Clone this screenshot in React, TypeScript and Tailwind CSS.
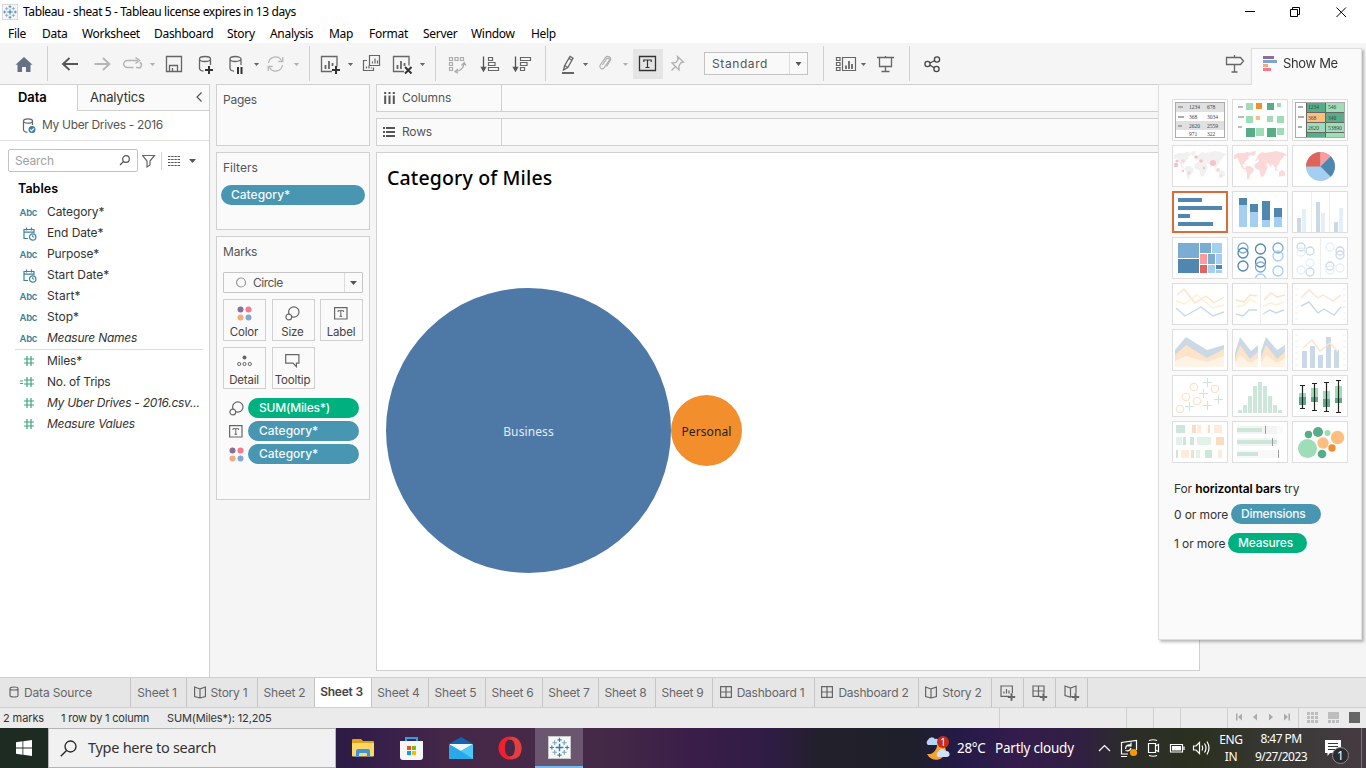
import React from "react";

type SlotProps = { x: number; w: number; y?: number; h?: number; children?: React.ReactNode };

/* An icon slot whose drawing coordinates are those of the window. */
function Slot({ x, w, y = 43, h = 41, children }: SlotProps) {
  return (
    <svg className="block shrink-0" width={w} height={h} viewBox={`${x} ${y} ${w} ${h}`} fill="none" stroke="#666" strokeWidth="1.3">
      {children}
    </svg>
  );
}

const Sep = () => <div className="h-[35px] w-px shrink-0 bg-[#d0d0d0]" />;

function Caret({ x, y = 64.5, c = "#666" }: { x: number; y?: number; c?: string }) {
  return <path d={`M${x - 2.6} ${y - 1.5}h5.2l-2.6 3z`} fill={c} stroke="none" />;
}

function Plus({ x, y, s = 4, c = "#333" }: { x: number; y: number; s?: number; c?: string }) {
  return <path d={`M${x - s} ${y}h${s * 2}M${x} ${y - s}v${s * 2}`} stroke={c} strokeWidth="2" />;
}

function TableauMark({ s }: { s: number }) {
  const p = (x: number, y: number, r: number, c: string, w = 1.2) => (
    <path key={`${x}-${y}`} d={`M${x - r} ${y}h${2 * r}M${x} ${y - r}v${2 * r}`} stroke={c} strokeWidth={w} />
  );
  return (
    <svg className="block" width={s} height={s} viewBox="0 0 24 24" fill="none">
      <rect x=".5" y=".5" width="23" height="23" fill="#f7f7f7" stroke="#c9c9c9" />
      {p(12, 12, 4, "#2d7fa8", 1.5)}
      {p(12, 4, 2.2, "#3f7fb0")}
      {p(12, 20, 2.2, "#3f7fb0")}
      {p(4, 12, 2.2, "#3f7fb0")}
      {p(20, 12, 2.2, "#3f7fb0")}
      {p(7, 7, 2.5, "#7ba7c4")}
      {p(17, 7, 2.5, "#7ba7c4")}
      {p(7, 17, 2.5, "#7ba7c4")}
      {p(17, 17, 2.5, "#7ba7c4")}
    </svg>
  );
}

function TitleBar() {
  return (
    <div className="flex h-6 items-center bg-white font-['Noto_Sans',sans-serif] text-[12px] text-black">
      <div className="ml-[2px] w-[16px]"><TableauMark s={16} /></div>
      <div className="ml-[5px] whitespace-nowrap tracking-[-0.39px]">Tableau - sheat 5 - Tableau license expires in 13 days</div>
      <svg className="ml-auto mr-[16px]" width="106" height="20" viewBox="1244 0 106 20" fill="none" stroke="#000" strokeWidth="1">
        <path d="M1245 9.5h10M1290.500 7.500h7v7h-7zM1292.500 7.500v-2h7v7h-2M1336.500 5.500l9.500 9.500M1346 5.500l-9.500 9.500" />
      </svg>
    </div>
  );
}

const menus: [string, string][] = [
  ["File", "w-[34px]"], ["Data", "w-[40px]"], ["Worksheet", "w-[72px]"], ["Dashboard", "w-[73px]"], ["Story", "w-[43px]"],
  ["Analysis", "w-[59px]"], ["Map", "w-[40px]"], ["Format", "w-[54px]"], ["Server", "w-[48px]"], ["Window", "w-[60px]"], ["Help", "w-[40px]"],
];

function MenuBar() {
  return (
    <div className="flex h-[19px] items-center bg-white pl-[8px] font-['Noto_Sans',sans-serif] text-[12px] text-black">
      {menus.map(([m, w]) => (
        <div key={m} className={`${w} shrink-0 whitespace-nowrap tracking-[-0.3px]`}>{m}</div>
      ))}
    </div>
  );
}

function Db({ x }: { x: number }) {
  return <path d={`M${x - 5.500} 59a5.500 2.500 0 0 1 11 0a5.500 2.500 0 0 1 -11 0v9.500q.3 2.200 4 2.700M${x + 5.500} 59v6`} />;
}

function Toolbar() {
  return (
    <div className="flex h-[41px] items-center bg-[#f5f5f5]">
      <Slot x={0} w={47}>
        <path d="M15.500 64.800L24 57l8.500 7.800h-2V72h-4.500v-5h-4v5h-4.500v-7.200z" fill="#667284" stroke="none" />
      </Slot>
      <Sep />
      <Slot x={48} w={261}>
        <path d="M63 64h15M69.500 58l-6.500 6 6.500 6" stroke="#555" strokeWidth="1.800" />
        <path d="M94.500 64h15M103 58l6.500 6-6.500 6" stroke="#b5b5b5" strokeWidth="1.800" />
        <path d="M133.500 67.500h-6a3.800 3.500 0 0 1 0-7H138M135.500 57.500l4 3-4 3M139.800 62.500a2.700 2.700 0 0 1-2.300 5h-1.500" stroke="#b5b5b5" strokeWidth="1.500" />
        <Caret x={152.500} c="#b0b0b0" />
        <path d="M166.500 56.500h15v15h-15zM169.500 71v-5.500h8V71M172.500 71v-3" />
        <Db x={205} /><Plus x={209} y={70} />
        <Db x={235.500} /><path d="M238 67v7M241.500 67v7" stroke="#333" strokeWidth="2" />
        <Caret x={256.500} />
        <path d="M268.500 63a7 7 0 0 1 13-2.500M282.500 65a7 7 0 0 1-13 2.500M282.800 57v4.500h-4.500M268.200 71v-4.500h4.500" stroke="#b8b8b8" />
        <Caret x={296.500} c="#b0b0b0" />
      </Slot>
      <Sep />
      <Slot x={310} w={125}>
        <path d="M332 71.500h-10.500v-15h15.500v10" />
        <path d="M325.500 69v-4M329 69v-8M332.500 66v-3" strokeWidth="1.800" />
        <Plus x={336} y={70} />
        <Caret x={350.500} />
        <path d="M369.500 55.500h10v10h-10z M372.500 63.500v-2M375 63.500v-5M377.500 63.500v-3M367 60.500h-3.500v10h10v-3M366.500 68.500v-2M369 68.500v-3M371.500 68.500v-1" strokeWidth="1.200" />
        <path d="M404 71.500h-10.500v-15h15.500v9" />
        <path d="M397.500 69v-4M401 69v-8M404.500 66v-3" strokeWidth="1.800" />
        <path d="M405 67l6.500 6.500M411.500 67l-6.500 6.500" stroke="#333" strokeWidth="2" />
        <Caret x={422.500} />
      </Slot>
      <Sep />
      <Slot x={436} w={109}>
        <path d="M449.500 57.500h3v3h-3zM455 57.500h3v3h-3zM460.500 57.500h3v3h-3zM449.500 62.500h3v3h-3zM449.500 67.500h3v3h-3zM464 63.500q-.5 6.500-8 8M461.500 65.500l2.700-3 1.800 3M458 69l-3 2.700 3 1.500" stroke="#ababab" strokeWidth="1.200" />
        <path d="M483.500 56.500v14M481.500 67.500l2 3.500 2-3.500z" fill="#555" stroke="#555" />
        <path d="M488.500 57.500h4v3h-4zM488.500 62.500h6.500v3h-6.500zM488.500 67.500h10v3h-10z" strokeWidth="1.200" />
        <path d="M515.500 56.500v14M513.500 67.500l2 3.500 2-3.500z" fill="#555" stroke="#555" />
        <path d="M520.500 57.500h10v3h-10zM520.500 62.500h6.500v3h-6.500zM520.500 67.500h4v3h-4z" strokeWidth="1.200" />
      </Slot>
      <Sep />
      <Slot x={546} w={87}>
        <path d="M563.500 70l1.200-4.500 5.300-9 3 1.800-5.200 9.200zM564.700 65.500l3 2M569 58.500l3 1.800" />
        <path d="M562 73h12" stroke="#555" strokeWidth="1.800" />
        <Caret x={585.500} />
        <path d="M602.500 65l4.300-6.500a1.500 1.500 0 0 1 2.500 1.500l-5.300 8a2.400 2.400 0 0 1-4-2.500l5.500-8.200a3 3 0 0 1 5 3l-4 6.200" stroke="#b0b0b0" strokeWidth="1.200" />
        <Caret x={625.500} c="#b0b0b0" />
      </Slot>
      <div className="h-[30px] w-[30px] shrink-0 bg-[#e5e5e5]">
        <Slot x={633} w={30} y={49} h={30}>
          <path d="M639.500 56.500h16v14h-16z" stroke="#333" />
          <path d="M643.800 62v-2h7.400v2M647.500 60v7.500M645.500 67.500h4" stroke="#333" strokeWidth="1.200" />
        </Slot>
      </div>
      <Slot x={663} w={41}>
        <path d="M677.500 56.500l6 5.500-2.500.5-2 3.500v4l-7-7 4-.5 2-3zM675.500 66.500l-4 4" stroke="#b0b0b0" />
      </Slot>
      <div className="flex h-[23px] w-[104px] shrink-0 border border-[#c3c3c3] bg-[#f9f9f9]">
        <div className="w-[85px] pl-[7px] text-[12px] leading-[21px] tracking-[0.6px] text-[#555]">Standard</div>
        <div className="flex w-[18px] items-center justify-center border-l border-[#ddd]">
          <svg width="7" height="4" viewBox="0 0 7 4"><path d="M.5 0h6L3.500 4z" fill="#555" /></svg>
        </div>
      </div>
      <Slot x={808} w={15} />
      <Sep />
      <Slot x={824} w={85}>
        <path d="M836.500 57.500h3.500v3h-3.500zM836.500 62.500h3.500v3h-3.500zM836.500 67.500h3.500v3h-3.500zM842.500 57.500h13v13h-13z" strokeWidth="1.200" />
        <path d="M846 69v-3.500M849 69v-8M852 69v-5" strokeWidth="1.800" />
        <Caret x={863.500} />
        <path d="M877 57.500h17M879.500 58v8.500h12V58M885.500 66.500v5M881.500 71.500h8M885.500 56v1.500" />
      </Slot>
      <Sep />
      <Slot x={910} w={341}>
        <g stroke="#444"><circle cx="927.500" cy="64" r="2.600" /><circle cx="937" cy="59.500" r="2.600" /><circle cx="936.500" cy="69" r="2.600" /><path d="M930 63l4.800-2.500M930 65.200l4.200 2.500" /></g>
        <path d="M1226.500 57.500h14l3 3.500-3 3.500h-14zM1234.500 55v2.500M1234.500 64.500v8M1231.500 72h6" />
      </Slot>
    </div>
  );
}

function Abc() {
  return <span className="text-[9.5px] font-semibold tracking-[-0.3px] text-[#3c7f9c]">Abc</span>;
}
function Cal() {
  return (
    <svg width="14" height="14" viewBox="0 0 14 14" fill="none" stroke="#3f829e" strokeWidth="1.200">
      <path d="M5 11.500H1V2.500h10v3.500M1 5.200h10M3.500.5v3M8.500.5v3" /><circle cx="9.700" cy="10" r="3.200" /><path d="M9.700 8.200V10h1.600" strokeWidth="1" />
    </svg>
  );
}
function Hash({ eq }: { eq?: boolean }) {
  return (
    <svg width="14" height="12" viewBox="0 0 14 12" fill="none" stroke="#3da57c" strokeWidth="1.200">
      <path d="M4 4h10M4 8h10M7 1v10M11 1v10" />{eq && <path d="M0 5h3M0 7.500h3" strokeWidth="1" />}
    </svg>
  );
}

type Field = { n: string; k: "abc" | "cal" | "num" | "calc"; t: string };
const dims: Field[] = [
  { n: "Category*", k: "abc", t: "tracking-[-0.1px]" }, { n: "End Date*", k: "cal", t: "tracking-[-0.1px]" }, { n: "Purpose*", k: "abc", t: "tracking-[-0.15px]" },
  { n: "Start Date*", k: "cal", t: "tracking-[-0.03px]" }, { n: "Start*", k: "abc", t: "tracking-[0.1px]" }, { n: "Stop*", k: "abc", t: "tracking-[0px]" },
  { n: "Measure Names", k: "abc", t: "italic tracking-[-0.25px]" },
];
const meas: Field[] = [
  { n: "Miles*", k: "num", t: "tracking-[-0.15px]" }, { n: "No. of Trips", k: "calc", t: "tracking-[-0.25px]" },
  { n: "My Uber Drives - 2016.csv...", k: "num", t: "italic tracking-[-0.28px]" }, { n: "Measure Values", k: "num", t: "italic tracking-[-0.25px]" },
];

function FieldRow({ f }: { f: Field }) {
  return (
    <div className="flex h-[21px] items-center whitespace-nowrap text-[12px] text-[#333]">
      <div className="flex w-[47px] items-center justify-end pr-[10px]">
        {f.k === "abc" ? <span className="pt-[1px]"><Abc /></span> : f.k === "cal" ? <span className="pt-[2px]"><Cal /></span> : <span className="mr-[3px]"><Hash eq={f.k === "calc"} /></span>}
      </div>
      <span className={f.t}>{f.n}</span>
    </div>
  );
}

function DataPane() {
  return (
    <div className="flex w-[210px] shrink-0 flex-col border-r border-[#d0d0d0] bg-white">
      <div className="flex h-[27px] border-t border-[#d4d4d4]">
        <div className="w-[77px] pl-[18px] pt-[3px] text-[13px] font-semibold leading-[18px] tracking-[-0.1px] text-black">Data</div>
        <div className="flex flex-1 justify-between border-b border-l border-[#d0d0d0] bg-[#fafafa] pl-[12px] pt-[3px] text-[13px] leading-[18px] tracking-[-0.2px] text-[#333]">
          Analytics
          <svg className="mr-[6px] mt-[4px]" width="8" height="10" viewBox="0 0 8 10" fill="none" stroke="#555" strokeWidth="1.200"><path d="M6.500.5L2 5l4.500 4.500" /></svg>
        </div>
      </div>
      <div className="flex h-[30px] items-center border-b border-[#e0e0e0] pl-[22px] text-[12px] text-[#555]">
        <svg width="15" height="16" viewBox="0 0 15 16" fill="none" stroke="#666" strokeWidth="1.200">
          <path d="M1.500 3a4.500 2.200 0 0 1 9 0a4.500 2.200 0 0 1-9 0v9q.3 2 4 2.300M10.500 3v4" /><circle cx="10" cy="11.500" r="3.500" fill="#3c7fa0" stroke="none" /><path d="M8.200 11.500l1.400 1.400 2.400-2.600" stroke="#fff" />
        </svg>
        <span className="ml-[5px] whitespace-nowrap pb-[1px] tracking-[-0.33px]">My Uber Drives - 2016</span>
      </div>
      <div className="mt-[8px] flex h-[23px] items-center pl-[8px]">
        <div className="flex h-[23px] w-[130px] items-center justify-between rounded-[2px] border border-[#c3c3c3] pl-[6px] pr-[6px] text-[12px] tracking-[-0.15px] text-[#a0a0a0]">
          Search
          <svg width="12" height="11" viewBox="0 0 12 11" fill="none" stroke="#555" strokeWidth="1.200"><circle cx="7" cy="4" r="3.300" /><path d="M4.500 6.500L1 10" /></svg>
        </div>
        <svg className="ml-[4px]" width="60" height="18" viewBox="142 151 60 18" fill="none" stroke="#666" strokeWidth="1.200">
          <path d="M142.500 154.500h12l-4.500 5.500v4l-3 2v-6z" /><path d="M161.500 151v18" stroke="#d4d4d4" strokeWidth="1" />
          <path d="M168 155.500h12M168 158.500h12M168 161.500h12M168 164.500h12" strokeDasharray="2.400 .8" stroke="#555" /><path d="M189 158h7l-3.500 4z" fill="#555" stroke="none" />
        </svg>
      </div>
      <div className="mt-[8px] pl-[18px] text-[12.5px] font-semibold leading-[18px] tracking-[0.05px] text-black">Tables</div>
      <div className="mt-[3px]">{dims.map((f) => <FieldRow key={f.n} f={f} />)}</div>
      <div className="ml-[15px] mr-[6px] mt-[1px] h-px bg-[#dcdcdc]" />
      <div>{meas.map((f) => <FieldRow key={f.n} f={f} />)}</div>
    </div>
  );
}

const TGlyph = () => (
  <svg width="14" height="13" viewBox="0 0 14 13" fill="none" stroke="#666"><path d="M.6.600h12.400v11.400H.6z" strokeWidth="1.200" /><path d="M4 5V3.700h5.600V5M6.800 3.700v5.600M5.500 9.300h2.600" /></svg>
);
const SizeGlyph = () => (
  <svg width="15" height="15" viewBox="0 0 15 15" fill="none" stroke="#666" strokeWidth="1.200"><circle cx="8.800" cy="6" r="5.200" /><circle cx="3.800" cy="11" r="2.900" fill="#fafafa" /></svg>
);
const ColorGlyph = () => (
  <svg width="15" height="15" viewBox="0 0 15 15"><circle cx="3.500" cy="3.500" r="3" fill="#8a6f96" /><circle cx="11.500" cy="3.500" r="3" fill="#f8788a" /><circle cx="3.500" cy="11.500" r="3" fill="#f4a97f" /><circle cx="11.500" cy="11.500" r="3" fill="#85a7d0" /></svg>
);
const DetailGlyph = () => (
  <svg width="15" height="12" viewBox="0 0 15 12" fill="none" stroke="#666"><circle cx="7.500" cy="2.500" r="2" fill="#666" stroke="none" /><circle cx="2.200" cy="9" r="1.600" /><circle cx="7.500" cy="9" r="1.600" /><circle cx="12.800" cy="9" r="1.600" /></svg>
);
const TipGlyph = () => (
  <svg width="15" height="14" viewBox="0 0 15 14" fill="none" stroke="#666" strokeWidth="1.200"><path d="M.7.700h13.200v8.500h-2.500v3.500L8 9.200H.7z" /></svg>
);

function MarkButton({ label, children }: { label: string; children: React.ReactNode }) {
  return (
    <div className="flex h-[42px] w-[43px] flex-col items-center border border-[#d0d0d0] bg-[#fafafa] pr-[1px]">
      <div className="flex h-[25px] items-center pt-[1px]">{children}</div>
      <div className="whitespace-nowrap text-[11.5px] leading-[14px] tracking-[-0.2px] text-[#444]">{label}</div>
    </div>
  );
}

function Pill({ c, children }: { c: string; children: React.ReactNode }) {
  return <div className={`${c} flex h-5 items-center rounded-full text-[12px] font-medium text-[#f4fafa]`}>{children}</div>;
}

function Shelves() {
  return (
    <div className="ml-[6px] flex w-[154px] shrink-0 flex-col gap-[6px] text-[12px] text-[#555]">
      <div className="h-[62px] border border-[#d0d0d0] bg-[#fafafa] pl-[6px] pt-[7px] leading-[16px] tracking-[-0.25px]">Pages</div>
      <div className="h-[78px] border border-[#d0d0d0] bg-[#fafafa] pl-[4px] pt-[7px]">
        <div className="pl-[2px] leading-[16px]">Filters</div>
        <div className="mt-[9px]"><Pill c="bg-[#4996b2] w-[144px] pl-[10px]">Category*</Pill></div>
      </div>
      <div className="h-[264px] border border-[#d0d0d0] bg-[#fafafa] px-[6px] pt-[7px]">
        <div className="leading-[16px] tracking-[-0.2px]">Marks</div>
        <div className="mt-[12px] flex h-[21px] items-center rounded-[1px] border border-[#c6c6c6] bg-[#fafafa] text-[12px]">
          <svg className="ml-[12px]" width="11" height="11" viewBox="0 0 11 11" fill="none" stroke="#999" strokeWidth="1.200"><circle cx="5" cy="5.500" r="4.500" /></svg>
          <span className="ml-[6px] pt-[1px] tracking-[-0.5px]">Circle</span>
          <div className="ml-auto flex h-[19px] w-[18px] items-center justify-center border-l border-[#ddd]">
            <svg width="7" height="4" viewBox="0 0 7 4"><path d="M0 0h7L3.500 4z" fill="#555" /></svg>
          </div>
        </div>
        <div className="mt-[6px] grid grid-cols-[43px_43px_43px] gap-x-[5.5px] gap-y-[6px]">
          <MarkButton label="Color"><ColorGlyph /></MarkButton>
          <MarkButton label="Size"><SizeGlyph /></MarkButton>
          <MarkButton label="Label"><TGlyph /></MarkButton>
          <MarkButton label="Detail"><DetailGlyph /></MarkButton>
          <MarkButton label="Tooltip"><TipGlyph /></MarkButton>
        </div>
        <div className="mt-[9px] flex flex-col gap-[3px]">
          <div className="flex items-center"><div className="flex w-[25px] pl-[6px]"><SizeGlyph /></div><Pill c="bg-[#00b180] w-[111px] pl-[11px] tracking-[-0.2px]">SUM(Miles*)</Pill></div>
          <div className="flex items-center"><div className="flex w-[25px] pl-[6px]"><TGlyph /></div><Pill c="bg-[#4996b2] w-[111px] pl-[11px]">Category*</Pill></div>
          <div className="flex items-center"><div className="flex w-[25px] pl-[6px]"><ColorGlyph /></div><Pill c="bg-[#4996b2] w-[111px] pl-[11px]">Category*</Pill></div>
        </div>
      </div>
    </div>
  );
}

function Worksheet() {
  return (
    <div className="ml-[6px] flex w-[824px] shrink-0 flex-col text-[12px] text-[#555]">
      <div className="flex h-[28px] border border-[#d0d0d0] bg-[#fafafa]">
        <div className="flex w-[125px] items-center border-r border-[#d0d0d0] pl-[7px]">
          <svg width="11" height="13" viewBox="0 0 11 13" stroke="#555" strokeWidth="2"><path d="M1.200 0v2M5.500 0v2M9.800 0v2M1.200 3.500V12M5.500 3.500V12M9.800 3.500V12" /></svg>
          <span className="ml-[7px] tracking-[-0.1px]">Columns</span>
        </div>
      </div>
      <div className="mt-[6px] flex h-[28px] border border-[#d0d0d0] bg-[#fafafa]">
        <div className="flex w-[125px] items-center border-r border-[#d0d0d0] pl-[6px]">
          <svg width="13" height="11" viewBox="0 0 13 11" stroke="#555" strokeWidth="2"><path d="M0 1h2M0 5h2M0 9h2M3 1h9M3 5h9M3 9h9" /></svg>
          <span className="ml-[6px] tracking-[-0.2px]">Rows</span>
        </div>
      </div>
      <div className="mt-[6px] flex h-[519px] flex-col border border-[#d0d0d0] bg-white">
        <div className="ml-[10px] mt-[12px] whitespace-nowrap font-['Noto_Sans',sans-serif] text-[19.5px] font-medium leading-[26px] tracking-[0.15px] text-black">Category of Miles</div>
        <div className="ml-[9px] mt-[97px] flex items-center font-['Noto_Sans',sans-serif] text-[12px]">
          <div className="flex h-[285px] w-[285px] items-center justify-center rounded-full bg-[#4e79a7] pt-[2px] tracking-[0.1px] text-[#e3eaf2]">Business</div>
          <div className="flex h-[71px] w-[71px] items-center justify-center rounded-full bg-[#f28e2b] pt-[2px] tracking-[0.1px] text-[#222]">Personal</div>
        </div>
      </div>
    </div>
  );
}

const B = "#5087b0", LB = "#a5cff0", FB = "#cbd9e7", FLB = "#e3f0fb", FO = "#fde3c8", G = "#56ad87", LG = "#9fdcb8", O = "#ffbe7e", FG = "#cce6da";

const bars = (rs: [number, number, number, number, string][]) =>
  rs.map(([x, y, w, h, c], i) => <rect key={i} x={x} y={y} width={w} height={h} fill={c} />);
const dots = (rs: [number, number, number, string][]) => rs.map(([x, y, r, c], i) => <circle key={i} cx={x} cy={y} r={r} fill={c} />);
const rings = (rs: [number, number, string][], r = 5) => rs.map(([x, y, c], i) => <circle key={i} cx={x} cy={y} r={r} fill="none" stroke={c} strokeWidth="1.300" />);
const line = (d: string, c: string) => <path d={d} fill="none" stroke={c} strokeWidth="1.400" />;
const nums = (rs: [number, number, string][]) => rs.map(([x, y, t], i) => <text key={i} x={x} y={y} className="font-['Liberation_Serif',serif] text-[5.5px]" fill="#444">{t}</text>);

function World({ c }: { c: string }) {
  return (
    <path
      fill={c}
      d="M2 10l4-2 6 0 3-1 5 1-2 3-2 0 1 2-3 3-2 2 1 2-3-1 2 4 2 0 0 2-4-2-3-6-1-4-4 1zM19 7l5-1-1 4-3 1zM14 21l4 0 4 3-1 3-3 3-1 4-2 0 0-6-2-4zM25 13l1-3 4-3 3 1 6-1 5-1 8 2 3 2-3 1-2 3-2 2-1 3-2 2-1 3-2-3-2-2-1 4-2-4-3-1 1 3-3 0-2-3-5 0 2-2-1-2-2 2-1 0zM24 18l6-1 4 4 2 1-2 4-2 5-3 1-2-7-3-1-2-3zM47 27l3-2 3 2 0 4-3 0-3 1zM43 22l3 3 1 1-4-1z"
    />
  );
}

const thumbs: React.ReactNode[] = [
  <>
    <rect x="3.500" y="3.500" width="49" height="35" fill="#fff" stroke="#aaa" />
    {bars([[4, 4, 48, 9, "#e0e0e0"], [4, 22, 48, 9, "#e0e0e0"], [6, 7, 5, 2, "#aaa"], [6, 17, 6, 2, "#aaa"], [6, 26, 4, 2, "#aaa"]])}
    {nums([[17, 10.300, "1234"], [35, 10.300, "678"], [17, 19.500, "368"], [35, 19.500, "3034"], [17, 28.500, "2620"], [35, 28.500, "2559"], [17, 36.500, "971"], [35, 36.500, "322"]])}
  </>,
  <>{bars([[6, 7, 5, 2, "#bbb"], [6, 17, 6, 2, "#bbb"], [6, 27, 4, 2, "#bbb"], [14, 4, 7, 7, LG], [24, 4, 6, 6, "#f28e2b"], [35, 4, 7, 7, G], [45, 4, 4, 4, LG], [14, 17, 7, 7, LG], [24, 17, 4, 4, O], [35, 17, 6, 6, LG], [45, 17, 7, 7, LG], [14, 29, 9, 9, G], [24, 29, 8, 8, LG], [35, 29, 9, 9, G], [45, 29, 7, 7, LG]])}</>,
  <>
    <rect x="3.500" y="3.500" width="49" height="35" fill="#fff" stroke="#aaa" />
    {bars([[14, 4, 19, 9, G], [33, 4, 19, 9, LG], [14, 13, 19, 10, O], [33, 13, 19, 10, G], [14, 23, 19, 10, LG], [33, 23, 19, 10, LG], [14, 34, 19, 4, G], [33, 34, 19, 4, LG], [6, 7, 5, 2, "#aaa"], [6, 17, 6, 2, "#aaa"], [6, 27, 4, 2, "#aaa"]])}
    <path d="M14.500 4v34M33.500 4v34M14 13.500h38M14 23.500h38M14 33.500h38" stroke="#666" />
    {nums([[16, 10.300, "1234"], [36, 10.300, "546"], [16, 20.500, "368"], [36, 20.500, "340"], [16, 30.500, "2620"], [36, 30.500, "53890"]])}
  </>,
  <><World c="#f1f1f1" />{dots([[4, 20, 2.200, "#f3c3c8"], [5, 16, 1.500, "#f3c3c8"], [11, 16, 1.800, "#f8d8da"], [24, 12, 1.800, "#f3c3c8"], [29, 16, 1.800, "#f3c3c8"], [41, 18, 3, "#f3c3c8"], [46, 25, 2, "#f8d8da"], [17, 28, 2, "#f8d8da"], [11, 26, 1.200, "#f3c3c8"], [49, 31, 1.500, "#f8d8da"], [32, 23, 1.200, "#f3c3c8"]])}</>,
  <World c="#fbd9d8" />,
  <><circle cx="28.500" cy="21.500" r="14.500" fill={LB} /><path d="M28.500 21.500V7A14.500 14.500 0 0 0 14 21.500z" fill="#e06459" /><path d="M28.500 21.500V7a14.500 14.500 0 0 1 10.200 4.300z" fill="#ff9c9a" /><path d="M28.500 21.500l10.200-10.200a14.500 14.500 0 0 1 0 20.500z" fill={B} /></>,
  <>{bars([[6, 7, 24, 4, B], [6, 15, 44, 4, B], [6, 23, 12, 4, B], [6, 31, 35, 4, B]])}</>,
  <>{bars([[7, 7, 8, 7, B], [7, 14, 8, 22, LB], [18, 13, 8, 8, B], [18, 21, 8, 15, LB], [30, 10, 8, 19, B], [30, 29, 8, 7, LB], [42, 17, 8, 9, B], [42, 26, 8, 10, LB]])}</>,
  <>{bars([[19, 1, 1, 40, "#eee"], [37, 1, 1, 40, "#eee"], [5, 27, 4, 14, FB], [10, 18, 4, 23, FLB], [24, 11, 4, 30, FB], [29, 22, 4, 19, FLB], [42, 31, 4, 10, FB], [47, 17, 4, 24, FLB]])}</>,
  <>{bars([[6, 6, 21, 15, "#7badd2"], [6, 22, 21, 14, B], [28, 6, 11, 10, "#7badd2"], [40, 6, 10, 10, LB], [28, 17, 7, 10, "#ff9c9a"], [36, 17, 7, 10, "#7badd2"], [44, 17, 6, 10, LB], [28, 28, 7, 8, "#e06459"], [36, 28, 7, 8, LB], [44, 28, 6, 4, B], [44, 33, 6, 3, LB]])}</>,
  <>{rings([[11, 11, "#7badd2"], [11, 16, B], [11, 29, B], [28.500, 12, B], [28.500, 25, B], [28.500, 30, "#7badd2"], [28.500, 42, LB], [46, 11, "#7badd2"], [46, 19, LB], [46, 34, LB]])}</>,
  <><path d="M28.500 1v40" stroke="#eee" />{rings([[9, 10, FB], [9, 15, FLB], [18, 14, FB], [18, 26, FLB], [9, 33, FLB], [18, 35, FB], [38, 10, FLB], [48, 14, FB], [48, 18, FB], [38, 29, FB], [38, 33, FLB], [48, 31, FLB]], 4)}</>,
  <>{line("M5 12l7-6 11 14 11-7 8 7 10-6", FO)}{line("M4 18l8 3 13-9 16 13 11-3", "#fff0cf")}{line("M4 25l9 8 16-9 12 9 11-4", FB)}</>,
  <><path d="M28.500 1v40" stroke="#eee" />{line("M4 17l8 2 6-7 7 1M32 17l7-7 6 4 8-2", FO)}{line("M4 24l8-2 6-6 7 4M31 23l8-3 5 2 8-3", "#fff0cf")}{line("M4 31l7 2 6-6h8M31 31l7-4 6 3 8-3", FB)}</>,
  <><path d="M3 6h3M3 12h3M3 18h3M3 24h3M3 30h3M3 36h3M51 6h3M51 12h3M51 18h3M51 24h3M51 30h3M51 36h3" stroke="#eee" />{line("M9 15l8-8 9 8 5-3 10 6 8-6", FO)}{line("M9 23l8-4 9 11 6-4 10 6 7-8", FB)}</>,
  <><path d="M3 21L14 8l21 13 17-5v20H3z" fill={FB} /><path d="M3 26l11-10 21 13 17-9v18H3z" fill={FO} /><path d="M3 32l11-5 21 6 17-6v11H3z" fill="#fff3e5" /></>,
  <><path d="M3 24L8 8l11 14 7-6v20H3zM29 22l5-14 11 13 8-5v20H29z" fill={FB} /><path d="M3 29l5-13 10 14 8-7v15H3zM29 29l5-13 11 14 8-7v15H29z" fill={FO} /><path d="M3 34l5-8 10 8 8-5v9H3zM29 34l5-8 11 8 8-5v9H29z" fill="#fff3e5" /></>,
  <><path d="M3 6h3M3 12h3M3 18h3M3 24h3M3 30h3M3 36h3M51 6h3M51 12h3M51 18h3M51 24h3M51 30h3M51 36h3" stroke="#eee" />{bars([[10, 22, 5, 17, FB], [18, 17, 5, 22, FB], [26, 26, 5, 13, FB], [34, 8, 5, 31, FB], [42, 21, 5, 18, FB]])}{line("M11 19l9-8 8 11 10-8 8 9", FO)}</>,
  <>{rings([[22, 12, FO], [43, 14, FO], [14, 22, FO], [25, 26, FO], [8, 34, FO]], 3.700)}<path d="M31 7.500h9M35.500 3v9M27 18.500h9M31.500 14v9M42 24.500h9M46.500 20v9M31 30.500h9M35.500 26v9M13 31.500h9M17.500 27v9" stroke={FG} strokeWidth="1" /></>,
  <>{bars([[6, 35, 4, 3, FG], [11, 30, 4, 8, FG], [16, 21, 4, 17, FG], [21, 11, 4, 27, FG], [26, 7, 4, 31, FG], [31, 11, 4, 27, FG], [36, 21, 4, 17, FG], [41, 30, 4, 8, FG], [46, 35, 4, 3, FG]])}</>,
  <>{bars([[7, 18, 7, 4, LG], [7, 22, 7, 8, G], [19, 13, 7, 9, LG], [19, 22, 7, 5, G], [31, 16, 7, 8, LG], [31, 24, 7, 8, G], [43, 11, 7, 12, LG], [43, 23, 7, 5, G]])}<path d="M10.500 10v24M8 10.500h5M8 33.500h5M22.500 8v28M20 8.500h5M20 35.500h5M34.500 7v30M32 7.500h5M32 36.500h5M46.500 5v33M44 5.500h5M44 37.500h5" stroke="#222" strokeWidth="1.200" /></>,
  <>{bars([[4, 4, 9, 8, FG], [20, 4, 4, 8, "#fbdcc1"], [25, 4, 4, 8, "#feebd9"], [36, 4, 2, 8, "#fbdcc1"], [42, 4, 8, 8, "#feebd9"], [4, 16, 6, 8, "#e1f2e8"], [11, 16, 3, 8, FG], [18, 16, 4, 8, FG], [25, 16, 14, 8, "#e1f2e8"], [44, 16, 8, 8, "#fbdcc1"], [4, 29, 2, 8, FG], [9, 29, 8, 8, "#feebd9"], [19, 29, 3, 8, "#fbdcc1"], [24, 29, 4, 8, "#e1f2e8"], [33, 29, 7, 8, FG], [46, 29, 4, 8, "#feebd9"]])}</>,
  <>{bars([[5, 5, 40, 8, "#f4f4f4"], [45, 5, 6, 8, "#fafafa"], [5, 17, 40, 8, "#f4f4f4"], [5, 29, 40, 8, "#f8f8f8"], [5, 7, 25, 4, FG], [5, 19, 40, 4, FG], [5, 31, 21, 4, FG], [33, 5, 1, 8, "#999"], [40, 17, 1, 8, "#999"], [46, 29, 1, 8, "#999"]])}</>,
  <>{dots([[15.500, 27.500, 9.500, LG], [16.500, 13.500, 3.700, G], [26, 11, 5, G], [35.500, 12, 3, LG], [45.500, 16.500, 6.700, O], [31, 22, 5.700, O], [40, 27, 3.700, "#f28e2b"], [30, 33, 4.300, G]])}</>,
];

function ShowMe() {
  return (
    <div className="absolute left-[1158px] top-[48px] flex w-[204px] flex-col items-end drop-shadow-[2px_2px_1.5px_rgba(0,0,0,0.28)]">
      <div className="relative z-10 flex h-[37px] w-[111px] items-center border border-b-0 border-[#dedede] bg-[#fafafa] pb-[6px] pl-[11px]">
        <svg width="15" height="16" viewBox="0 0 15 16"><path d="M0 0h11v3H0z" fill="#8a6f9e" /><path d="M0 4h14v3H0z" fill="#7ea3cf" /><path d="M0 8h5v3H0z" fill="#f4a97f" /><path d="M0 12h8v3H0z" fill="#f8788a" /></svg>
        <span className="ml-[5px] whitespace-nowrap text-[13px] tracking-[-0.35px] text-[#333]">Show Me</span>
      </div>
      <div className="-mt-px h-[556px] w-[204px] border border-[#dedede] bg-[#fafafa] pl-[13px] pt-[14px] text-[12px] text-[#333]">
        <div className="grid grid-cols-[56px_56px_56px] gap-x-[4px] gap-y-[4px]">
          {thumbs.map((t, i) => (
            <svg key={i} className="block bg-white" width="56" height="42" viewBox="0 0 56 42">
              {t}
              {i === 6 ? <rect x="1" y="1" width="54" height="40" fill="none" stroke="#dc6b3a" strokeWidth="2" /> : <rect x=".5" y=".5" width="55" height="41" fill="none" stroke="#dedede" />}
            </svg>
          ))}
        </div>
        <div className="mt-[17px] whitespace-nowrap pl-[2px] leading-[18px] tracking-[-0.1px]">For <span className="font-semibold text-black">horizontal bars</span> try</div>
        <div className="mt-[5px] flex items-center pl-[2px]"><span className="mr-[3px] mt-[3px] w-[54px] whitespace-nowrap tracking-[-0.1px]">0 or more</span><Pill c="bg-[#4996b2] w-[90px] pl-[10px] tracking-[-0.25px]">Dimensions</Pill></div>
        <div className="mt-[8px] flex items-center pl-[2px]"><span className="mr-[2px] mt-[3px] w-[52px] whitespace-nowrap tracking-[-0.1px]">1 or more</span><Pill c="bg-[#00b180] w-[79px] pl-[10px] tracking-[-0.2px]">Measures</Pill></div>
      </div>
    </div>
  );
}

const DashIcon = () => (
  <svg className="-mt-[2px]" width="12" height="12" viewBox="0 0 12 12" fill="none" stroke="#666" strokeWidth="1.200"><path d="M.6.600h10.800v10.800H.6zM6 .6v10.800M.6 6h10.800" /></svg>
);
const BookIcon = () => (
  <svg className="-mt-[1px]" width="12" height="13" viewBox="0 0 12 13" fill="none" stroke="#666" strokeWidth="1.200"><path d="M6 3L.6 1v9.500L6 12l5.400-1.500V1L6 3v9" /></svg>
);

const sheetTabs: { n: string; w: string; icon?: React.ReactNode; active?: boolean }[] = [
  { n: "Sheet 1", w: "w-[56px]" }, { n: "Story 1", w: "w-[71px]", icon: <BookIcon /> }, { n: "Sheet 2", w: "w-[57px]" },
  { n: "Sheet 3", w: "w-[57px]", active: true }, { n: "Sheet 4", w: "w-[57px]" }, { n: "Sheet 5", w: "w-[57px]" }, { n: "Sheet 6", w: "w-[57px]" },
  { n: "Sheet 7", w: "w-[56px]" }, { n: "Sheet 8", w: "w-[57px]" }, { n: "Sheet 9", w: "w-[57px]" },
  { n: "Dashboard 1", w: "w-[102px]", icon: <DashIcon /> }, { n: "Dashboard 2", w: "w-[104px]", icon: <DashIcon /> }, { n: "Story 2", w: "w-[73px]", icon: <BookIcon /> },
];

function SheetTabs() {
  return (
    <div className="flex h-[31px] border-b border-t border-[#cfcfcf] bg-[#e6e6e6] text-[12px] text-[#666]">
      <div className="flex w-[131px] items-center border-r border-[#c6c6c6] pl-[9px]">
        <svg className="-mt-[2px]" width="10" height="12" viewBox="0 0 10 12" fill="none" stroke="#666" strokeWidth="1.200"><path d="M1 2.500Q1 1 5 1t4 1.500v7Q9 11 5 11T1 9.500zQ1 4 5 4t4-1.500" /></svg>
        <span className="ml-[5px] whitespace-nowrap tracking-[-0.15px]">Data Source</span>
      </div>
      {sheetTabs.map((t) => (
        <div key={t.n} className={`${t.w} ${t.active ? "bg-white pb-[2px] font-semibold text-[#444] tracking-[-0.22px]" : "tracking-[-0.22px]"} flex shrink-0 items-center justify-center gap-[5px] whitespace-nowrap border-r border-[#c6c6c6] pr-[3px]`}>
          {t.icon}{t.n}
        </div>
      ))}
      <div className="flex w-[32px] items-center justify-center border-r border-[#c6c6c6]"><svg width="16" height="16" viewBox="0 0 16 16" fill="none" stroke="#666" strokeWidth="1.200"><path d="M9 11.400H1V1h11.400v7M4 8.500V6.500M6.500 8.500V4M9 8.500V5.500" /><Plus x={11.500} y={12} s={3.700} c="#666" /></svg></div>
      <div className="flex w-[32px] items-center justify-center border-r border-[#c6c6c6]"><svg width="16" height="16" viewBox="0 0 16 16" fill="none" stroke="#666" strokeWidth="1.200"><path d="M8 11.400H1V1h11v7M6.500 1v10.400M1 6h11" /><Plus x={11.500} y={12} s={3.700} c="#666" /></svg></div>
      <div className="flex w-[32px] items-center justify-center border-r border-[#c6c6c6]"><svg width="16" height="16" viewBox="0 0 16 16" fill="none" stroke="#666" strokeWidth="1.200"><path d="M8 11.500L6.500 12 1 10.500V1l5.500 2L12 1v7M6.500 3v9" /><Plus x={11.500} y={12} s={3.700} c="#666" /></svg></div>
    </div>
  );
}

function StatusBar() {
  return (
    <div className="flex h-[20px] items-center bg-[#ebebeb] text-[11px] text-[#333]">
      <span className="ml-[3px] w-[58px] whitespace-nowrap tracking-[-0.1px]">2 marks</span>
      <span className="w-[106px] whitespace-nowrap tracking-[-0.2px]">1 row by 1 column</span>
      <span className="whitespace-nowrap tracking-[-0.13px]">SUM(Miles*): 12,205</span>
      <svg className="ml-auto" width="368" height="20" viewBox="998 708 368 20" fill="none">
        <path d="M999.500 708v20M1126.500 708v20M1153.500 708v20M1180.500 708v20M1227.500 708v20M1298.500 708v20" stroke="#cfcfcf" />
        <path d="M1236 713.500h1.500v7H1236zM1242 713.500v7l-4-3.500zM1257 713.500v7l-4-3.500zM1269 713.500v7l4-3.500zM1284 713.500v7l4-3.500zM1288.500 713.500h1.500v7h-1.500z" fill="#aaa" />
        <path d="M1307 712h3v3h-3zM1311 712h3v3h-3zM1315 712h3v3h-3zM1307 716h3v3h-3zM1311 716h3v3h-3zM1315 716h3v3h-3zM1307 720h3v3h-3zM1311 720h3v3h-3zM1315 720h3v3h-3zM1328 712h11v7h-11zM1328 720h3v3h-3zM1332 720h3v3h-3zM1336 720h3v3h-3z" fill="#bdbdbd" />
        <path d="M1349 712h11v11h-11z" fill="#666" />
      </svg>
    </div>
  );
}

function Taskbar() {
  return (
    <div className="flex h-[40px] bg-[linear-gradient(90deg,#1e2b22_0,#1e2b22_48px,#2b1b45_336px,#39204a_390px,#452848_450px,#452a47_600px,#3a1e49_690px,#2f1c45_770px,#22202b_820px,#1e1f2a_910px,#241a48_960px,#341c4b_1020px,#301f42_1080px,#2b2d28_1130px,#2b3020_1200px,#3b3a38_1290px,#453b42_1366px)] font-['Noto_Sans',sans-serif] text-white">
      <div className="flex w-[48px] items-center justify-center"><svg width="16" height="16" viewBox="0 0 16 16" fill="#fff"><path d="M0 2.200l6.500-.9v6.300H0zM7.300 1.200L16 0v7.600H7.300zM0 8.400h6.500v6.300L0 13.800zM7.300 8.400H16V16l-8.700-1.200z" /></svg></div>
      <div className="flex w-[288px] items-center border border-[#b5b5b5] bg-[#f1f1f1] pl-[11px] text-[14.5px] text-[#333]">
        <svg width="17" height="17" viewBox="0 0 17 17" fill="none" stroke="#222" strokeWidth="1.300"><circle cx="10.500" cy="6.500" r="5.500" /><path d="M6.500 10.500L.8 16.200" /></svg>
        <span className="ml-[11px] whitespace-nowrap tracking-[-0.28px]">Type here to search</span>
      </div>
      <svg className="block shrink-0" width="199" height="40" viewBox="336 728 199 40">
        <path d="M352 740q0-1 1-1h8l2 2h10q1 0 1 1v13q0 1-1 1h-20q-1 0-1-1z" fill="#e5a216" /><path d="M352 743h22v12.500q0 1-1 1h-20q-1 0-1-1z" fill="#ffd767" /><path d="M356 757v-6q0-2 2-2h10q2 0 2 2v6h-3v-3q0-1-1-1h-6q-1 0-1 1v3z" fill="#3c95dc" />
        <path d="M406 742v-4h11v4" fill="none" stroke="#22a4ea" strokeWidth="2" /><path d="M400 741h23v16q0 3-3 3h-17q-3 0-3-3z" fill="#f7f7f7" />
        <path d="M407 746h4v4h-4z" fill="#f25022" /><path d="M412 746h4v4h-4z" fill="#7fba00" /><path d="M407 751h4v4h-4z" fill="#00a4ef" /><path d="M412 751h4v4h-4z" fill="#ffb900" />
        <path d="M449 744l12-7 12 7v5h-24z" fill="#1265b3" /><path d="M450 744h22v9h-22z" fill="#f3f7fa" /><path d="M449 744l12 7 12-7v15h-24z" fill="#27a9ea" /><path d="M461 751l12-7v15z" fill="#4cc9f5" />
        <path fillRule="evenodd" d="M510 736.500a11.500 11.500 0 1 0 0 23a11.500 11.500 0 0 0 0-23zm0 3c3.500 0 5 4 5 8.500s-1.500 8.500-5 8.500-5-4-5-8.500 1.500-8.500 5-8.500z" fill="#f0202c" /><path d="M513 736.800q8 1.500 8.500 11.200t-8.500 11.200q-3-.5-4.500-2.200 6.500 0 6.500-9t-6.500-9q1.500-1.700 4.500-2.200z" fill="#e0403f" />
      </svg>
      <div className="flex w-[48px] items-center justify-center border-b-2 border-[#76b9ed] bg-[#6b566f]"><TableauMark s={23} /></div>
      <div className="ml-[341px] flex shrink-0 items-center text-[13.5px]">
        <svg width="27" height="26" viewBox="924 735 27 26">
          <path d="M936 741a9 9 0 0 1-9 13 10 10 0 0 0 19-3 10 10 0 0 0-10-10z" fill="#f6a32c" /><path d="M928 745a3 3 0 0 1 0-5 4 4 0 0 1 7-1 3 3 0 0 1 2 6z" fill="#b8d4f3" /><path d="M938 757a3 3 0 0 1 0-5 4.500 4.500 0 0 1 8-1 3 3 0 0 1 1 6z" fill="#cfe0f7" /><circle cx="943" cy="742" r="6" fill="#c42b1c" /><text x="943" y="746" textAnchor="middle" fontSize="10" fill="#fff">1</text>
        </svg>
        <span className="ml-[6px] w-[38px] whitespace-nowrap tracking-[-0.3px]">28°C</span>
        <span className="w-[97px] whitespace-nowrap tracking-[-0.22px]">Partly cloudy</span>
      </div>
      <svg className="block shrink-0" width="124" height="40" viewBox="1092 728 124 40" fill="none" stroke="#fff" strokeWidth="1.200">
        <path d="M1099 751l5.500-5.500 5.500 5.500" /><path d="M1128 754h-6.500v-11.500l15-2v9.500M1121 756.500h6M1125.500 749q.5-5 5-4M1131 742.500v3.500h-3.500M1131 748q-1.500 4-5.500 2.500" /><circle cx="1133.500" cy="752.500" r="3.600" fill="#ff9800" stroke="none" />
        <path d="M1148.500 743.500h7v9h-7zM1155.500 746l3-1.500v7l-3-1.500M1149 740.500q4.500-1.500 8 0M1149 755.500q4.500 1.500 8 0" />
        <path d="M1170.500 744.500h12v7.500h-12zM1184 746.500v3.500" /><path d="M1172 746h9v4.500h-9z" fill="#fff" stroke="none" /><path d="M1193.500 746h2.500l3.500-3.500v11L1196 750h-2.500zM1202 745.500q1.500 2.500 0 5M1204.500 743.500q3 4.500 0 9M1207 741.500q4 6.500 0 13" />
      </svg>
      <div className="flex w-[30px] flex-col items-center justify-center text-[12px] leading-[17px] tracking-[-0.4px]"><span>ENG</span><span>IN</span></div>
      <div className="flex w-[70px] flex-col items-center justify-center whitespace-nowrap text-[12px] leading-[18px] tracking-[-0.55px]"><span>8:47 PM</span><span>9/27/2023</span></div>
      <svg className="block shrink-0" width="50" height="40" viewBox="1316 728 50 40" fill="none">
        <path d="M1325 740h16v13h-11l-2.500 3v-3h-2.500z" fill="#fff" /><path d="M1328 743.500h10M1328 746.500h10M1328 749.500h7" stroke="#333" /><circle cx="1340.500" cy="755.500" r="8" fill="#2c2c2f" stroke="#8a8a8a" /><text x="1340.500" y="760" textAnchor="middle" fontSize="12" fill="#fff">1</text><path d="M1361.500 728v40" stroke="#7a6f78" />
      </svg>
    </div>
  );
}

export default function App() {
  return (
    <div className="relative flex h-[768px] w-[1366px] flex-col overflow-hidden bg-[#f5f5f5] font-['Inter',sans-serif]">
      <TitleBar />
      <MenuBar />
      <Toolbar />
      <div className="flex h-[593px]">
        <DataPane />
        <Shelves />
        <Worksheet />
      </div>
      <SheetTabs />
      <StatusBar />
      <Taskbar />
      <ShowMe />
    </div>
  );
}
